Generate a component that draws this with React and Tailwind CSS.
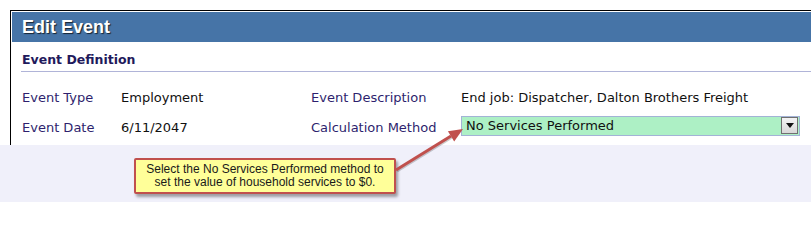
import React from 'react';

const rows = [
  { label: 'Event Type', value: 'Employment', label2: 'Event Description', value2: 'End job: Dispatcher, Dalton Brothers Freight' },
  { label: 'Event Date', value: '6/11/2047', label2: 'Calculation Method', select: 'No Services Performed' },
];

const SelectBox = ({ value }) => (
  <div className="mb-[5px] flex h-[20px] w-[339px] items-center justify-between border border-[#a3b3d6] bg-[#adf0c5] pl-[4px] pr-px">
    <span className="text-[13px] leading-none text-[#111]">{value}</span>
    <div className="flex h-[17px] w-[17px] items-center justify-center border border-[#707070] bg-gradient-to-b from-[#f4f4f4] to-[#d8d8d8]">
      <svg width="8" height="5" viewBox="0 0 8 5">
        <polygon points="0,0 8,0 4,5" fill="#111" />
      </svg>
    </div>
  </div>
);

const App = () => {
  return (
    <div className="relative flex h-[202px] w-[811px] flex-col overflow-hidden bg-white font-['DejaVu_Sans',sans-serif]">
      <div className="pl-[10px] pt-[10px]">
        <div className="h-[135px] border-l border-t border-black pl-px pt-px">
          <div className="flex h-[30px] items-center bg-[#4674a7] pl-[10px]">
            <span className="font-['Liberation_Sans',sans-serif] text-[18px] font-bold text-white [text-shadow:1px_1px_1px_rgba(0,0,0,0.7)]">
              Edit Event
            </span>
          </div>
          <div className="ml-[9px]">
            <div className="border-b border-[#b0b4d8] pb-[3px] pl-px pt-[10px] text-[12.5px] font-bold leading-[16px] text-[#1f1a5c]">
              Event Definition
            </div>
            <div className="pl-px pt-[11px]">
              {rows.map((r) => (
                <div key={r.label} className="flex h-[30px] items-center text-[13px]">
                  <span className="w-[99px] text-[#2e1f6e]">{r.label}</span>
                  <span className="w-[190px] text-[#111]">{r.value}</span>
                  <span className="w-[150px] text-[#2e1f6e]">{r.label2}</span>
                  {r.select ? <SelectBox value={r.select} /> : <span className="text-[#111]">{r.value2}</span>}
                </div>
              ))}
            </div>
          </div>
        </div>
      </div>

      <div className="flex-1 bg-[#f0f0fa] pl-[134px] pt-[13px]">
        <div className="w-[262px] rounded-[2px] border-2 border-[#c0504d] bg-[#ffff99] py-[3px] text-center font-['Liberation_Sans',sans-serif] text-[12px] leading-[13px] text-[#1a1a1a] shadow-[2px_3px_3px_rgba(0,0,0,0.35)]">
          Select the No Services Performed method to
          <br />
          set the value of household services to $0.
        </div>
      </div>

      {/* callout arrow */}
      <svg className="pointer-events-none absolute left-0 top-0" width="811" height="202">
        <line x1="397" y1="171" x2="452" y2="137" stroke="rgba(0,0,0,0.2)" strokeWidth="3" />
        <line x1="396" y1="170" x2="451" y2="136" stroke="#c0504d" strokeWidth="3" />
        <polygon points="463,129 454.2,141.4 447.9,131.2" fill="#c0504d" />
      </svg>
    </div>
  );
};

export default App;
